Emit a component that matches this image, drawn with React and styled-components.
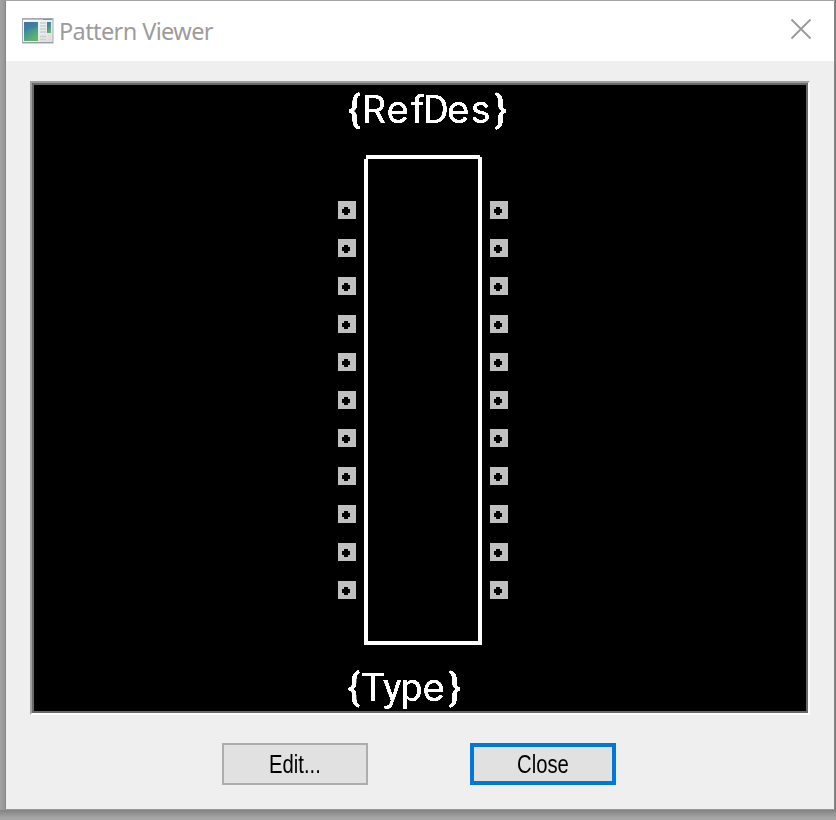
import React from "react";
import styled, { createGlobalStyle } from "styled-components";

const GlobalStyle = createGlobalStyle`
  *, *::before, *::after { box-sizing: border-box; }
  body { margin: 0; background: #a6a6a6; overflow: hidden; }
`;

const Desktop = styled.div`
  width: 836px;
  height: 820px;
  padding: 0 1px 10px 5px;
  background: linear-gradient(to bottom, transparent 810px, #828282 810px, #a6a6a6 818px),
    linear-gradient(to right, #a3a3a3 0, #969696 5px, #808080 5px);
`;

const Window = styled.main`
  display: flex;
  flex-direction: column;
  height: 810px;
  border: 1px solid #858585;
  border-top-color: #a5a5a5;
  border-bottom-color: #999;
  background: #efefef;
`;

const TitleBar = styled.header`
  display: flex;
  align-items: center;
  height: 60px;
  padding: 0 22px 0 16px;
  background: #fff;
`;

const Title = styled.h1`
  flex: 1;
  margin: 0 0 0 5px;
  font: 400 23.5px/32px "Noto Sans", "Open Sans", sans-serif;
  letter-spacing: -0.6px;
  color: #9c9c9c;
`;

const CloseIconButton = styled.button`
  display: flex;
  width: 22px;
  height: 22px;
  margin-top: -4px;
  padding: 0;
  border: 0;
  background: none;
`;

const Viewport = styled.section`
  width: 780px;
  height: 634px;
  margin: 20px 0 0 24px;
  border: 2px solid;
  border-color: #a0a0a0 #fff #fff #a0a0a0;
`;

const Canvas = styled.div`
  width: 776px;
  height: 630px;
  border: 2px solid #696969;
  background: #000;

  svg { display: block; }
`;

const Label = styled.text`
  font: 400 38.5px Inter, Roboto, sans-serif;
  fill: #fff;
`;

const Brace = styled.tspan`
  font: 500 38px Roboto, sans-serif;
`;

const NarrowLetter = styled.tspan`
  font: 400 39.4px Roboto, sans-serif;
`;

const Actions = styled.footer`
  display: flex;
  gap: 102px;
  margin: 28px 0 0 216px;
`;

const Button = styled.button`
  display: flex;
  align-items: center;
  justify-content: center;
  width: 146px;
  height: 42px;
  padding: 0;
  border: ${({ $primary }) => ($primary ? "4px solid #0078d7" : "2px solid #adadad")};
  background: #e1e1e1;
  color: #000;
  font: 400 25px/30px "Liberation Sans", Arial, sans-serif;
`;

const Caption = styled.span`
  transform: scaleX(0.81);
`;

const PADS = Array.from({ length: 11 }, (_, i) => 201 + i * 38);

function AppIcon() {
  return (
    <svg width="32" height="26" viewBox="0 0 32 26">
      <defs>
        <linearGradient id="screen" x1="0" y1="0" x2="0.5" y2="1">
          <stop offset="0" stopColor="#3f78ac" />
          <stop offset="0.5" stopColor="#419394" />
          <stop offset="1" stopColor="#62b36d" />
        </linearGradient>
        <linearGradient id="frame" x1="0" y1="0" x2="1" y2="1">
          <stop offset="0" stopColor="#fff" />
          <stop offset="1" stopColor="#dcdcdc" />
        </linearGradient>
      </defs>
      <rect x="0.5" y="0.5" width="30.5" height="24.5" fill="url(#frame)" stroke="#a5aab2" />
      <path d="M1 1.5h30" stroke="#b9c0ca" />
      <path d="M21 1.5h9" stroke="#8b95a2" />
      <path d="M1 24.5h30" stroke="#9a9da2" />
      <rect x="2" y="4" width="14" height="19" fill="url(#screen)" />
      <path d="M2 14Q7 10 16 9V4H2z" fill="#3471a3" opacity="0.35" />
      <path d="M18 5h6M18 8h6M18 11h6M18 14h6M18 18.500h6M18 21.500h6" stroke="#cecece" strokeWidth="1.4" />
      <rect x="25" y="4" width="4" height="11" fill="url(#screen)" />
      <path d="M26 18h3M26 21h3" stroke="#d6d6d6" />
    </svg>
  );
}

function Pad({ x, y }) {
  return (
    <g transform={`translate(${x} ${y})`}>
      <path d="M0 0h18v18H0z" fill="#c0c0c0" />
      <path d="M6 6h4v2h2v4h-2v2H6v-2H4V8h2z" fill="#000" />
    </g>
  );
}

function Pattern() {
  return (
    <svg width="772" height="626" viewBox="34 85 772 626">
      <defs>
        <filter id="crisp" x="-5%" y="-20%" width="110%" height="140%">
          <feComponentTransfer>
            <feFuncA type="linear" slope="8" intercept="-2.5" />
          </feComponentTransfer>
        </filter>
      </defs>
      <Label y="123" filter="url(#crisp)">
        <Brace x="348">{"{"}</Brace>
        <tspan x="361.500 386.500 410.500">Ref</tspan>
        <NarrowLetter x="423">D</NarrowLetter>
        <tspan x="447 470.500">es</tspan>
        <Brace x="494.500">{"}"}</Brace>
      </Label>
      <g shapeRendering="crispEdges">
        <path
          fill="#fff"
          fillRule="evenodd"
          d="M366 155H480V157H482V645H364V159H366zM368 159V641H478V159z"
        />
        {PADS.map((y) => (
          <React.Fragment key={y}>
            <Pad x={338} y={y} />
            <Pad x={490} y={y} />
          </React.Fragment>
        ))}
      </g>
      <Label y="701" filter="url(#crisp)">
        <Brace x="347.500">{"{"}</Brace>
        <NarrowLetter x="361 383 400.500">Typ</NarrowLetter>
        <tspan x="422.500">e</tspan>
        <Brace x="448.500">{"}"}</Brace>
      </Label>
    </svg>
  );
}

export default function App() {
  return (
    <>
      <GlobalStyle />
      <Desktop>
        <Window>
          <TitleBar>
            <AppIcon />
            <Title>Pattern Viewer</Title>
            <CloseIconButton aria-label="Close window">
              <svg width="22" height="22" viewBox="0 0 22 22">
                <path d="M1.500 1.500l19 19M20.500 1.500l-19 19" stroke="#999" strokeWidth="1.800" />
              </svg>
            </CloseIconButton>
          </TitleBar>
          <Viewport>
            <Canvas>
              <Pattern />
            </Canvas>
          </Viewport>
          <Actions>
            <Button>
              <Caption>Edit...</Caption>
            </Button>
            <Button $primary>
              <Caption>Close</Caption>
            </Button>
          </Actions>
        </Window>
      </Desktop>
    </>
  );
}
